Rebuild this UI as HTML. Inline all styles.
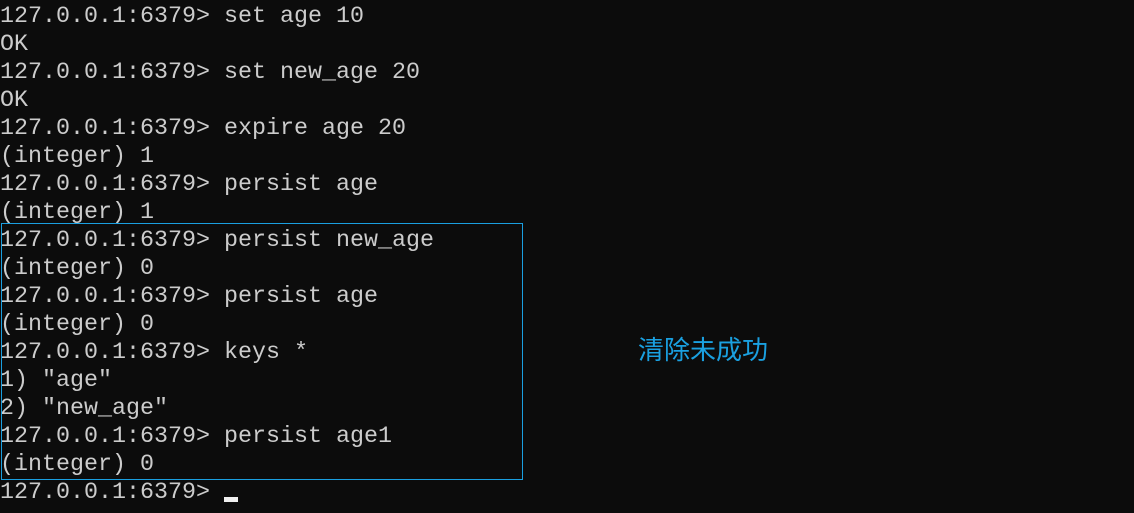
<!DOCTYPE html><html><head><style>
body{margin:0;width:1134px;height:513px;background:#0c0c0c;overflow:hidden;position:relative}
pre{margin:0;position:absolute;left:0;top:3px;font-family:"Liberation Mono",monospace;font-size:23.33px;line-height:28px;color:#cccccc}
.box{position:absolute;left:1px;top:223px;width:520px;height:255px;border:1px solid #1a9fe0}
.t{position:absolute;left:638px;top:333px;font-family:"Noto Sans CJK SC",sans-serif;font-size:26px;color:#1aa0e0;line-height:32px}
.c{position:absolute;left:224px;top:497px;width:14px;height:5px;background:#f0f0f0}
</style></head><body>
<pre>127.0.0.1:6379&gt; set age 10
OK
127.0.0.1:6379&gt; set new_age 20
OK
127.0.0.1:6379&gt; expire age 20
(integer) 1
127.0.0.1:6379&gt; persist age
(integer) 1
127.0.0.1:6379&gt; persist new_age
(integer) 0
127.0.0.1:6379&gt; persist age
(integer) 0
127.0.0.1:6379&gt; keys *
1) "age"
2) "new_age"
127.0.0.1:6379&gt; persist age1
(integer) 0
127.0.0.1:6379&gt;</pre>
<div class="box"></div>
<div class="t">清除未成功</div>
<div class="c"></div>
</body></html>
